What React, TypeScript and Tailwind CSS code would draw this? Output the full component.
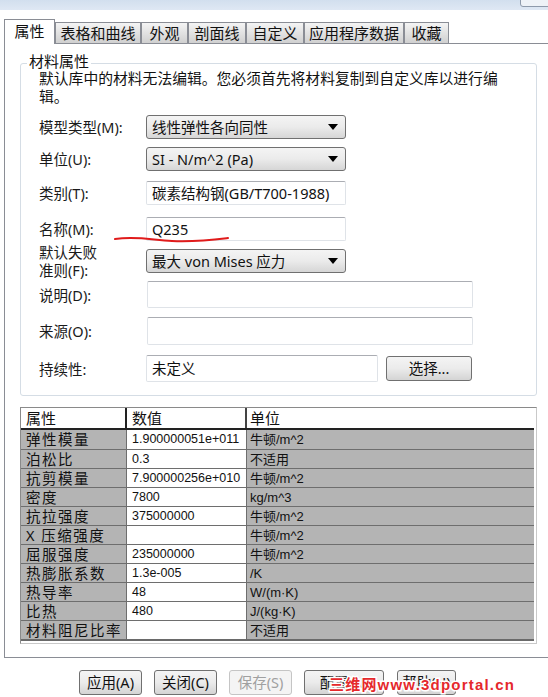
import React from "react";

function Select({ text }: { text: string }) {
  return (
    <div className="flex h-[24px] w-[200px] items-center justify-between rounded-[3px] border border-[#707070] bg-linear-to-b from-[#f4f4f4] via-[#ebebeb] to-[#d6d6d6] pl-[5px] pr-[7px] text-[14.5px] leading-none text-[#111]">
      <span>{text}</span>
      <svg width="10" height="6" viewBox="0 0 10 6">
        <path d="M0 0H10L5 6Z" fill="#000" />
      </svg>
    </div>
  );
}

function Input({ text, w, h }: { text?: string; w: string; h: string }) {
  return (
    <div
      className={`flex items-center rounded-[2px] border border-[#dfe3e8] border-t-[#abadb3] bg-white pl-[5px] text-[14.5px] leading-none text-[#111] ${w} ${h}`}
    >
      {text}
    </div>
  );
}

function Row({
  label,
  children,
  mt,
  h,
}: {
  label: React.ReactNode;
  children: React.ReactNode;
  mt: string;
  h: string;
}) {
  return (
    <div className={`flex items-center ${mt} ${h}`}>
      <div className="w-[107px] shrink-0 text-[14.5px] leading-[18px] text-[#1a1a1a]">{label}</div>
      {children}
    </div>
  );
}

const tableRows: [string, string, string][] = [
  ["弹性模量", "1.900000051e+011", "牛顿/m^2"],
  ["泊松比", "0.3", "不适用"],
  ["抗剪模量", "7.900000256e+010", "牛顿/m^2"],
  ["密度", "7800", "kg/m^3"],
  ["抗拉强度", "375000000", "牛顿/m^2"],
  ["X 压缩强度", "", "牛顿/m^2"],
  ["屈服强度", "235000000", "牛顿/m^2"],
  ["热膨胀系数", "1.3e-005", "/K"],
  ["热导率", "48", "W/(m·K)"],
  ["比热", "480", "J/(kg·K)"],
  ["材料阻尼比率", "", "不适用"],
];

function Tab({ text, w }: { text: string; w: string }) {
  return (
    <div
      className={`flex h-[21px] items-center justify-center border border-b-0 border-[#8a8d95] bg-linear-to-b from-[#f4f4f4] to-[#d0d0d0] text-[15px] leading-none text-[#111] ${w}`}
    >
      {text}
    </div>
  );
}

function Btn({ text, w, disabled }: { text: string; w: string; disabled?: boolean }) {
  return (
    <div
      className={`flex h-[25px] items-center justify-center rounded-[3px] border text-[14.5px] leading-none ${w} ${
        disabled
          ? "border-[#c5c5c5] bg-[#f4f4f4] text-[#a0a0a0]"
          : "border-[#707070] bg-linear-to-b from-[#f4f4f4] via-[#ebebeb] to-[#d4d4d4] text-[#111]"
      }`}
    >
      {text}
    </div>
  );
}

export default function App() {
  return (
    <div className="relative h-[697px] w-[548px] overflow-hidden bg-white font-['Noto_Sans','Noto_Sans_CJK_SC',sans-serif]">
      {/* top strip */}
      <div className="relative h-[10px] bg-linear-to-b from-[#d2dfee] to-[#dfe8f4]">
        <div className="absolute right-[-6px] top-[-4px] h-[11px] w-[34px] rounded-[3px] border border-[#8e9aab] bg-[#eef2f7]" />
      </div>
      {/* tabs */}
      <div className="mt-[9px] flex h-[24px] items-end pl-[4px]">
        <div className="relative z-10 mb-[-1px] flex h-[25px] w-[51px] items-start justify-center border border-b-0 border-[#8a8d95] bg-white pt-[2px] text-[15px] leading-[18px] text-[#111]">
          属性
        </div>
        <Tab text="表格和曲线" w="w-[86px]" />
        <Tab text="外观" w="w-[47px]" />
        <Tab text="剖面线" w="w-[58px]" />
        <Tab text="自定义" w="w-[58px]" />
        <Tab text="应用程序数据" w="w-[100px]" />
        <Tab text="收藏" w="w-[45px]" />
      </div>
      {/* panel */}
      <div className="ml-[4px] h-[615px] border-b border-l border-t border-[#8a8d95] pl-[15px] pt-[19px]">
        {/* group box */}
        <div className="relative h-[333px] w-[517px] rounded-[3px] border border-[#d5dde5] pl-[18px] pt-[5px]">
          <span className="absolute left-[6px] top-[-12px] bg-white px-[2px] text-[15px] leading-[18px] text-[#111]">
            材料属性
          </span>
          <div className="text-[14.8px] leading-[18px] text-[#111]">
            <div className="whitespace-nowrap">默认库中的材料无法编辑。您必须首先将材料复制到自定义库以进行编</div>
            <div>辑。</div>
          </div>
          <Row label={<>模型类型(M):</>} mt="mt-[10px]" h="h-[24px]">
            <Select text="线性弹性各向同性" />
          </Row>
          <Row label={<>单位(U):</>} mt="mt-[8px]" h="h-[24px]">
            <Select text="SI - N/m^2 (Pa)" />
          </Row>
          <Row label={<>类别(T):</>} mt="mt-[10px]" h="h-[24px]">
            <Input text="碳素结构钢(GB/T700-1988)" w="w-[200px]" h="h-[24px]" />
          </Row>
          <Row label={<>名称(M):</>} mt="mt-[12px]" h="h-[24px]">
            <Input text="Q235" w="w-[200px]" h="h-[24px]" />
          </Row>
          <Row
            label={
              <>
                默认失败
                <br />
                准则(F):
              </>
            }
            mt="mt-[8px]"
            h="h-[24px]"
          >
            <Select text="最大 von Mises 应力" />
          </Row>
          <Row label={<>说明(D):</>} mt="mt-[8px]" h="h-[27px]">
            <div className="ml-[1px]">
              <Input w="w-[326px]" h="h-[27px]" />
            </div>
          </Row>
          <Row label={<>来源(O):</>} mt="mt-[9px]" h="h-[28px]">
            <div className="ml-[1px]">
              <Input w="w-[326px]" h="h-[28px]" />
            </div>
          </Row>
          <Row label={<>持续性:</>} mt="mt-[10px]" h="h-[27px]">
            <Input text="未定义" w="w-[232px]" h="h-[27px]" />
            <div className="ml-[8px]">
              <Btn text="选择..." w="w-[86px]" />
            </div>
          </Row>
        </div>
        {/* table */}
        <div className="mt-[11px] h-[237px] w-[517px] border border-[#c9c9c9] border-l-[#8a8a8a] border-t-[#8a8a8a]">
          <div className="w-[513px] border-b-[2px] border-[#6a6a6a]">
            <div className="flex h-[22px] border-b-[2px] border-[#222] bg-white text-[15px] leading-none text-[#111]">
              <div className="flex w-[106px] items-center border-r-[2px] border-[#222] pl-[5px]">属性</div>
              <div className="flex w-[120px] items-center border-r-[2px] border-[#444] pl-[5px]">数值</div>
              <div className="flex flex-1 items-center pl-[3px]">单位</div>
            </div>
            {tableRows.map(([a, b, c], i) => (
              <div
                key={i}
                className={`flex h-[19px] text-[#111] ${i > 0 ? "border-t border-[#6e6e6e]" : ""}`}
              >
                <div className="flex w-[106px] items-center border-r border-[#6e6e6e] bg-[#b4b4b4] pl-[5px] text-[14.5px] leading-none tracking-[1.5px]">
                  {a}
                </div>
                <div className="flex w-[120px] items-center border-r border-[#6e6e6e] bg-white pl-[5px] font-['Liberation_Sans',sans-serif] text-[12.5px] leading-none">
                  {b}
                </div>
                <div className="flex flex-1 items-center bg-[#b4b4b4] pl-[3px] font-['Liberation_Sans','Noto_Sans_CJK_SC',sans-serif] text-[13px] leading-none">
                  {c}
                </div>
              </div>
            ))}
          </div>
        </div>
      </div>
      {/* bottom buttons */}
      <div className="mt-[12px] flex pl-[79px]">
        <Btn text="应用(A)" w="w-[63px]" />
        <div className="ml-[12px]">
          <Btn text="关闭(C)" w="w-[63px]" />
        </div>
        <div className="ml-[12px]">
          <Btn text="保存(S)" w="w-[63px]" disabled />
        </div>
        <div className="ml-[12px]">
          <Btn text="配置(N)" w="w-[80px]" />
        </div>
        <div className="ml-[13px]">
          <Btn text="帮助(H)" w="w-[59px]" />
        </div>
      </div>
      {/* red annotation underline */}
      <svg className="absolute left-[112px] top-[234px]" width="120" height="12" viewBox="0 0 120 12">
        <path d="M3 5 C 25 2, 40 6, 60 7 C 85 8, 100 6, 116 4" stroke="#e01b1b" strokeWidth="2" fill="none" strokeLinecap="round" />
      </svg>
      {/* watermark */}
      <div className="absolute left-[329px] top-[676px] font-['Liberation_Sans','Noto_Sans_CJK_SC',sans-serif] text-[15px] font-bold leading-[17px] tracking-[1.2px] text-[#e5282c] [-webkit-text-stroke:3px_white] [paint-order:stroke_fill]">
        三维网www.3dportal.cn
      </div>
    </div>
  );
}
